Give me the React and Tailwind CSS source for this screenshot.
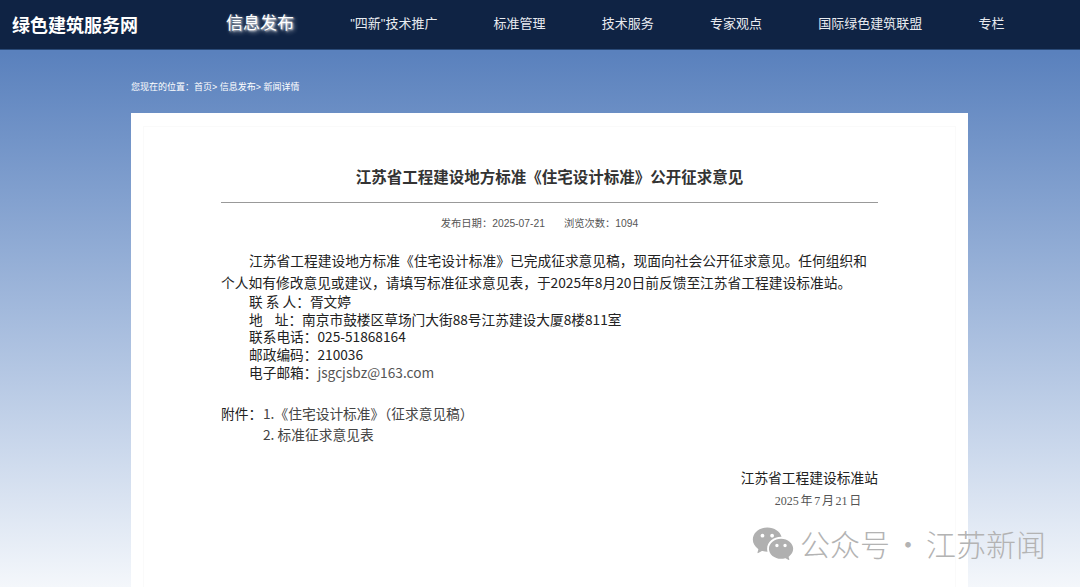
import React from "react";
import { RiWechatFill } from "react-icons/ri";

const sans = "font-['Liberation_Sans','Noto_Sans_CJK_SC',sans-serif]";
const cjk = "font-['Noto_Sans_CJK_SC',sans-serif]";

const navItems = ['"四新"技术推广', "标准管理", "技术服务", "专家观点", "国际绿色建筑联盟", "专栏"];

function Header() {
  return (
    <header className="flex h-[50px] items-center bg-[#0f2344] border-b border-[#2a4a78] text-white">
      <div className={`ml-3 w-[126px] text-[18px] font-bold whitespace-nowrap ${cjk}`}>绿色建筑服务网</div>
      <nav className={`ml-[88px] -mt-0.5 flex items-center gap-[56.2px] text-[13px] text-[#e8ebf0] whitespace-nowrap ${sans}`}>
        <a className="text-[17px] text-white [text-shadow:1px_1px_2px_rgba(255,255,255,0.8),2px_2px_4px_rgba(255,255,255,0.6)]">信息发布</a>
        {navItems.map((item) => (
          <a key={item}>{item}</a>
        ))}
      </nav>
    </header>
  );
}

function Article() {
  return (
    <div className="ml-[131px] w-[837px] bg-white px-3 pt-[13px]">
      <div className="h-[600px] border border-b-0 border-[#fafafa] px-[77px]">
        <h1 className={`pt-[37px] text-center text-[15.5px] leading-[24px] font-bold text-[#333] ${cjk}`}>
          江苏省工程建设地方标准《住宅设计标准》公开征求意见
        </h1>
        <div className="mt-[14px] border-t border-[#999]"></div>
        <div className={`mt-[13px] flex justify-center gap-[19px] pr-[20px] text-[10.3px] leading-[16px] text-[#555] ${sans}`}>
          <span>发布日期：2025-07-21</span>
          <span>浏览次数：1094</span>
        </div>
        <div className={`mt-[17px] text-[13.74px] leading-[22px] text-[#222] ${cjk}`}>
          <p className="indent-[28px]">
            江苏省工程建设地方标准《住宅设计标准》已完成征求意见稿，现面向社会公开征求意见。任何组织和个人如有修改意见或建议，请填写标准征求意见表，于2025年8月20日前反馈至江苏省工程建设标准站。
          </p>
          <div className="pl-[28px] text-[13.7px] leading-[17.6px]">
            <p>联 系 人：胥文婷</p>
            <p>
              地<span className="inline-block w-[12px]"></span>址：南京市鼓楼区草场门大街88号江苏建设大厦8楼811室
            </p>
            <p>联系电话：025-51868164</p>
            <p>邮政编码：210036</p>
            <p className="mt-px">
              电子邮箱：<span className="text-[#555]">jsgcjsbz@163.com</span>
            </p>
          </div>
          <div className="mt-[21px] flex leading-[21px] text-[#444]">
            <span className="w-[42px] shrink-0 whitespace-nowrap text-[#222]">附件：</span>
            <div>
              <p>1.《住宅设计标准》（征求意见稿）</p>
              <p>2. 标准征求意见表</p>
            </div>
          </div>
          <p className="mt-[21px] text-right text-[#222]">江苏省工程建设标准站</p>
          <p className="mt-[2px] pr-[15px] text-right font-['Liberation_Serif','Noto_Sans_CJK_SC',serif] text-[12px] text-[#555]">
            2025<span className="mx-[1.7px]">年</span>7<span className="mx-[1.7px]">月</span>21<span className="mx-[1.7px]">日</span>
          </p>
        </div>
      </div>
    </div>
  );
}

export default function App() {
  return (
    <div className="relative h-[587px] w-[1080px] overflow-hidden bg-gradient-to-b from-[#5a81bd] from-[9%] to-[#f4f7fb]">
      <Header />
      <div className={`ml-[131px] mt-[30px] h-[33px] text-[9px] leading-[14px] text-white ${sans}`}>
        您现在的位置：首页&gt; 信息发布&gt; 新闻详情
      </div>
      <Article />
      <div className={`absolute left-[751px] top-[522px] flex items-center font-light text-[#b3b3b3] whitespace-nowrap ${cjk}`}>
        <RiWechatFill className="h-[44px] w-[44px] text-[#b0b0b0]" />
        <div className="-mt-[3px] flex items-center text-[30px] leading-[40px]">
          <span className="ml-[5px]">公众号</span>
          <span className="w-[36px] text-center">·</span>
          <span>江苏新闻</span>
        </div>
      </div>
    </div>
  );
}
